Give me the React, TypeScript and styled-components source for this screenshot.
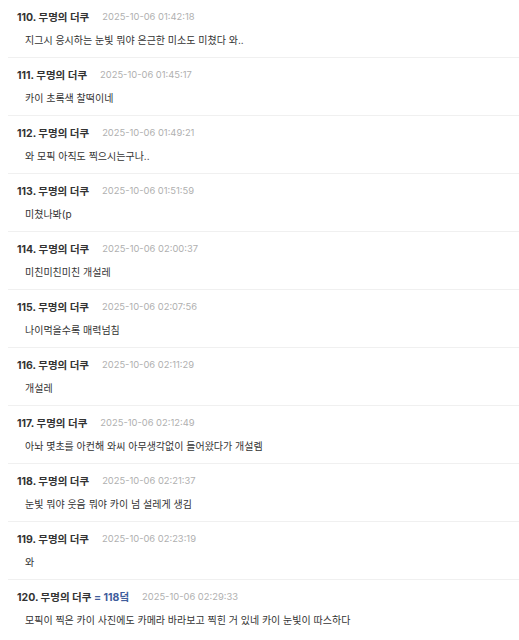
import React from 'react';
import styled, { createGlobalStyle } from 'styled-components';

const GlobalStyle = createGlobalStyle`
  body {
    margin: 0;
    background: #fff;
    font-family: Inter, "Noto Sans CJK KR", sans-serif;
    color: #333;
  }
`;

interface Comment {
  no: number;
  date: string;
  text: string;
  reply?: string;
}

const comments: Comment[] = [
  { no: 110, date: '2025-10-06 01:42:18', text: '지그시 응시하는 눈빛 뭐야 은근한 미소도 미쳤다 와..' },
  { no: 111, date: '2025-10-06 01:45:17', text: '카이 초록색 찰떡이네' },
  { no: 112, date: '2025-10-06 01:49:21', text: '와 모픽 아직도 찍으시는구나..' },
  { no: 113, date: '2025-10-06 01:51:59', text: '미쳤나봐(p' },
  { no: 114, date: '2025-10-06 02:00:37', text: '미친미친미친 개설레' },
  { no: 115, date: '2025-10-06 02:07:56', text: '나이먹을수록 매력넘침' },
  { no: 116, date: '2025-10-06 02:11:29', text: '개설레' },
  { no: 117, date: '2025-10-06 02:12:49', text: '아놔 몇초를 아컨해 와씨 아무생각없이 들어왔다가 개설렘' },
  { no: 118, date: '2025-10-06 02:21:37', text: '눈빛 뭐야 웃음 뭐야 카이 넘 설레게 생김' },
  { no: 119, date: '2025-10-06 02:23:19', text: '와' },
  {
    no: 120,
    date: '2025-10-06 02:29:33',
    text: '모픽이 찍은 카이 사진에도 카메라 바라보고 찍힌 거 있네 카이 눈빛이 따스하다',
    reply: '= 118덬',
  },
];

const List = styled.ul`
  list-style: none;
  margin: 0;
  padding: 0 0 0 8px;
`;

const Item = styled.li`
  padding: 8px 0 9px 9px;
  border-bottom: 1px solid #f0f0f0;

  &:last-child {
    border-bottom: none;
  }
`;

const Header = styled.div`
  display: flex;
  align-items: center;
  height: 16px;
  gap: 13px;
`;

const Name = styled.span`
  font-size: 10.5px;
  font-weight: 700;
  color: #333;
`;

const Reply = styled.span`
  color: #3f5d9c;
`;

const Date = styled.span`
  font-size: 9.4px;
  color: #b0b0b0;
`;

const Body = styled.p`
  margin: 8px 0 0 8px;
  font-size: 10px;
  line-height: 16px;
  color: #333;
`;

const App: React.FC = () => {
  return (
    <>
      <GlobalStyle />
      <List>
        {comments.map((c) => (
          <Item key={c.no}>
            <Header>
              <Name>
                {c.no}. 무명의 더쿠{c.reply && <Reply> {c.reply}</Reply>}
              </Name>
              <Date>{c.date}</Date>
            </Header>
            <Body>{c.text}</Body>
          </Item>
        ))}
      </List>
    </>
  );
};

export default App;
